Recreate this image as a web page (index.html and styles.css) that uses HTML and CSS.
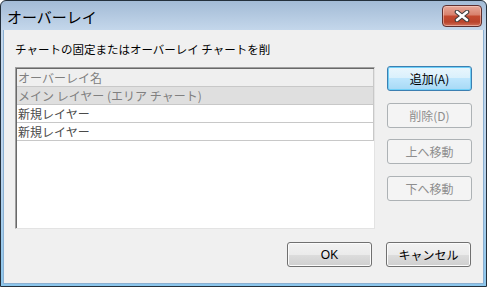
FILE: index.html
```html
<!DOCTYPE html>
<html lang="ja">
<head>
  <meta charset="UTF-8" />
  <title>オーバーレイ</title>
  <link rel="stylesheet" href="styles.css">
</head>
<body>

  <div class="window">
    <div class="titlebar">
      <span class="title">オーバーレイ</span>
      <div class="close-btn">
        <svg width="16" height="12" viewBox="0 0 16 12">
          <path d="M3 2 L13 10 M13 2 L3 10" stroke="#3b3b3b" stroke-width="4.6" stroke-linecap="round" fill="none"/>
          <path d="M3 2 L13 10 M13 2 L3 10" stroke="#ffffff" stroke-width="2.6" stroke-linecap="round" fill="none"/>
        </svg>
      </div>
    </div>

    <div class="client">
      <p class="intro">チャートの固定またはオーバーレイ チャートを削</p>

      <div class="main">
        <div class="listbox">
          <div class="row header">オーバーレイ名</div>
          <div class="row locked">メイン レイヤー (エリア チャート)</div>
          <div class="row">新規レイヤー</div>
          <div class="row">新規レイヤー</div>
        </div>

        <div class="side">
          <button type="button" class="btn focused">追加(A)</button>
          <button type="button" class="btn" disabled>削除(D)</button>
          <button type="button" class="btn" disabled>上へ移動</button>
          <button type="button" class="btn" disabled>下へ移動</button>
        </div>
      </div>

      <div class="footer">
        <button type="button" class="btn ok">OK</button>
        <button type="button" class="btn">キャンセル</button>
      </div>
    </div>
  </div>

</body>
</html>
```

FILE: styles.css
```css
* {
  box-sizing: border-box;
}

body {
  margin: 0;
  background: #ffffff;
  font-family: "Noto Sans CJK JP", "Noto Sans", sans-serif;
}

.window {
  width: 487px;
  height: 287px;
  display: flex;
  flex-direction: column;
  border: 1px solid #24303c;
  border-radius: 6px 6px 0 0;
  padding: 0 2px 2px;
  background: linear-gradient(#a3bbd6, #c4d7eb 29px, #b9d3ec 60%, #8cc6ec);
}

.titlebar {
  height: 29px;
  display: flex;
  align-items: flex-start;
  padding: 0 2px 0 4px;
}

.title {
  font-size: 15px;
  line-height: 15px;
  margin-top: 8px;
  color: #000;
}

.close-btn {
  margin-left: auto;
  margin-top: 4px;
  width: 40px;
  height: 22px;
  border: 1px solid #5e3030;
  border-radius: 4px;
  background: linear-gradient(#e8a898, #d8806c 45%, #c44a30 50%, #b9442c 80%, #d0705a);
  box-shadow: inset 0 0 0 1px rgba(255, 220, 210, 0.5);
  display: flex;
  align-items: center;
  justify-content: center;
}

.client {
  flex: 1;
  background: #f0f0f0;
  border: 1px solid #8bb0d2;
  border-top: none;
  padding: 11px 11px 0 11px;
  display: flex;
  flex-direction: column;
}

.intro {
  margin: 0;
  font-size: 11.5px;
  line-height: 16px;
  color: #000;
}

.main {
  display: flex;
  margin-top: 10px;
  gap: 12px;
}

.listbox {
  width: 360px;
  height: 162px;
  background: #ffffff;
  border: 1px solid;
  border-color: #a0a0a0 #e3e3e3 #e3e3e3 #a0a0a0;
  box-shadow: inset 1px 1px 0 #696969;
  padding: 1px 1px 0 1px;
}

.row {
  width: 357px;
  height: 18px;
  font-size: 12px;
  line-height: 17px;
  padding-left: 1px;
  color: #4a4a4a;
  border-bottom: 1px solid #c8c8c8;
  border-right: 1px solid #c8c8c8;
  white-space: nowrap;
}

.row.header {
  background: #efefef;
  color: #808080;
}

.row.locked {
  background: #dfdfdf;
  color: #808080;
}

.side {
  display: flex;
  flex-direction: column;
  gap: 11.5px;
  margin-top: -1px;
}

.btn {
  width: 85px;
  height: 25px;
  padding: 0;
  font-family: "Noto Sans CJK JP", "Noto Sans", sans-serif;
  font-size: 12px;
  color: #000;
  border: 1px solid #707070;
  border-radius: 3px;
  background: linear-gradient(#f2f2f2, #ebebeb 50%, #dddddd 50%, #cfcfcf);
  box-shadow: inset 0 0 0 1px #fbfbfb;
}

.btn.focused {
  border-color: #3c7fb1;
  background: linear-gradient(#eaf6fd, #d9f0fc 50%, #bee6fd 50%, #a7d9f5);
  box-shadow: inset 0 0 0 1px #6fd0f8;
}

.btn:disabled {
  color: #8e8e8e;
  border-color: #adb2b5;
  background: #f4f4f4;
  box-shadow: none;
}

.ok {
  font-family: "Liberation Sans", sans-serif;
}

.footer {
  display: flex;
  justify-content: flex-end;
  gap: 14px;
  margin-top: 13px;
  padding-right: 1px;
}
```
